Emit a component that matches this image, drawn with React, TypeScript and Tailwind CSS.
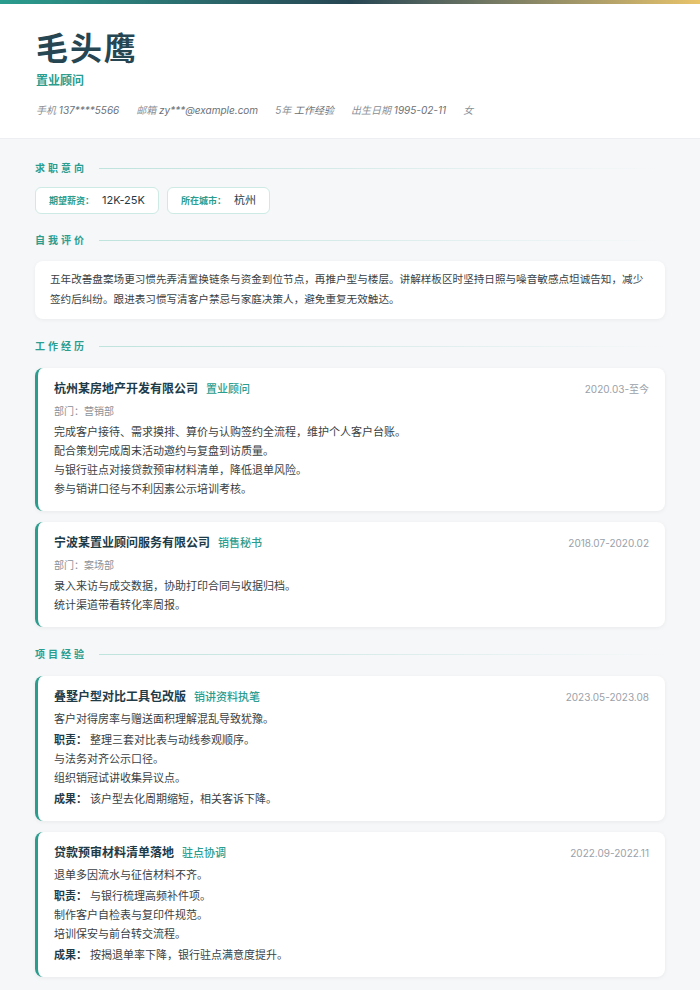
const F = { fontFamily: 'Inter, "Noto Sans CJK SC", sans-serif' };

function Sec({ t }: { t: string }) {
  return (
    <div className="flex items-center gap-3 h-[14px]">
      <span className="text-[10px] font-semibold text-[#2a9d8f] tracking-[0.3em]">{t}</span>
      <div className="flex-1 h-px bg-gradient-to-r from-[#bfe3dd] to-transparent" />
    </div>
  );
}

function Card({ title, role, date, children }: any) {
  return (
    <div className="bg-white rounded-lg border-l-[3px] border-[#2a9d8f] shadow-[0_1px_4px_rgba(0,0,0,0.06)] pl-[16px] pr-[16px] pt-[12px] pb-[12px]">
      <div className="flex items-baseline">
        <span className="text-[12px] font-bold text-[#1f3b47]">{title}</span>
        <span className="ml-2 text-[11px] font-medium text-[#2a9d8f]">{role}</span>
        <span className="ml-auto text-[10px] text-[#9aa1a9]">{date}</span>
      </div>
      <div className="text-[11px] leading-[19px] text-[#3a3f44] mt-[4px]">{children}</div>
    </div>
  );
}

export default function App() {
  return (
    <div style={F} className="w-[700px] min-h-[990px] bg-[#f6f7f9]">
      <div className="h-[4px] bg-gradient-to-r from-[#2a9d8f] via-[#264653] to-[#e9c46a]" />
      <div className="bg-white border-b border-[#eceef1] px-[36px] pt-[27px] h-[135px]">
        <div className="text-[32px] font-bold leading-[36px] text-[#264653] tracking-[0.06em]">毛头鹰</div>
        <div className="text-[12px] font-semibold text-[#2a9d8f] mt-[5px]">置业顾问</div>
        <div className="flex gap-[17px] text-[10px] italic text-[#8a9096] mt-[13px]">
          <span>手机 <span className="text-[#6b7177]">137****5566</span></span>
          <span>邮箱 <span className="text-[#6b7177]">zy***@example.com</span></span>
          <span>5年 <span className="text-[#6b7177]">工作经验</span></span>
          <span>出生日期 <span className="text-[#6b7177]">1995-02-11</span></span>
          <span>女</span>
        </div>
      </div>
      <div className="px-[35px] pt-[22px] flex flex-col">
        <Sec t="求职意向" />
        <div className="flex gap-[8px] mt-[12px]">
          {[["期望薪资：", "12K-25K"], ["所在城市：", "杭州"]].map(([a, b]) => (
            <div key={a} className="bg-white border border-[#cdeae5] rounded-md h-[27px] px-[13px] flex items-center gap-[8px]">
              <span className="text-[9px] font-semibold text-[#2a9d8f]">{a}</span>
              <span className="text-[11px] text-[#1f3b47]">{b}</span>
            </div>
          ))}
        </div>
        <div className="mt-[19px]"><Sec t="自我评价" /></div>
        <div className="mt-[14px] bg-white rounded-lg shadow-[0_1px_4px_rgba(0,0,0,0.05)] px-[15px] py-[9px] text-[10.6px] leading-[20px] text-[#3a3f44]">
          五年改善盘案场更习惯先弄清置换链条与资金到位节点，再推户型与楼层。讲解样板区时坚持日照与噪音敏感点坦诚告知，减少签约后纠纷。跟进表习惯写清客户禁忌与家庭决策人，避免重复无效触达。
        </div>
        <div className="mt-[20px]"><Sec t="工作经历" /></div>
        <div className="mt-[15px] flex flex-col gap-[11px]">
          <Card title="杭州某房地产开发有限公司" role="置业顾问" date="2020.03-至今">
            <div className="text-[10px] text-[#8a9096] mb-[2px]">部门：营销部</div>
            <div>完成客户接待、需求摸排、算价与认购签约全流程，维护个人客户台账。</div>
            <div>配合策划完成周末活动邀约与复盘到访质量。</div>
            <div>与银行驻点对接贷款预审材料清单，降低退单风险。</div>
            <div>参与销讲口径与不利因素公示培训考核。</div>
          </Card>
          <Card title="宁波某置业顾问服务有限公司" role="销售秘书" date="2018.07-2020.02">
            <div className="text-[10px] text-[#8a9096] mb-[2px]">部门：案场部</div>
            <div>录入来访与成交数据，协助打印合同与收据归档。</div>
            <div>统计渠道带看转化率周报。</div>
          </Card>
        </div>
        <div className="mt-[20px]"><Sec t="项目经验" /></div>
        <div className="mt-[15px] flex flex-col gap-[11px]">
          <Card title="叠墅户型对比工具包改版" role="销讲资料执笔" date="2023.05-2023.08">
            <div>客户对得房率与赠送面积理解混乱导致犹豫。</div>
            <div className="mt-[2px]"><b className="font-semibold text-[#1f3b47]">职责：</b> 整理三套对比表与动线参观顺序。</div>
            <div>与法务对齐公示口径。</div>
            <div>组织销冠试讲收集异议点。</div>
            <div className="mt-[2px]"><b className="font-semibold text-[#1f3b47]">成果：</b> 该户型去化周期缩短，相关客诉下降。</div>
          </Card>
          <Card title="贷款预审材料清单落地" role="驻点协调" date="2022.09-2022.11">
            <div>退单多因流水与征信材料不齐。</div>
            <div className="mt-[2px]"><b className="font-semibold text-[#1f3b47]">职责：</b> 与银行梳理高频补件项。</div>
            <div>制作客户自检表与复印件规范。</div>
            <div>培训保安与前台转交流程。</div>
            <div className="mt-[2px]"><b className="font-semibold text-[#1f3b47]">成果：</b> 按揭退单率下降，银行驻点满意度提升。</div>
          </Card>
        </div>
      </div>
    </div>
  );
}
